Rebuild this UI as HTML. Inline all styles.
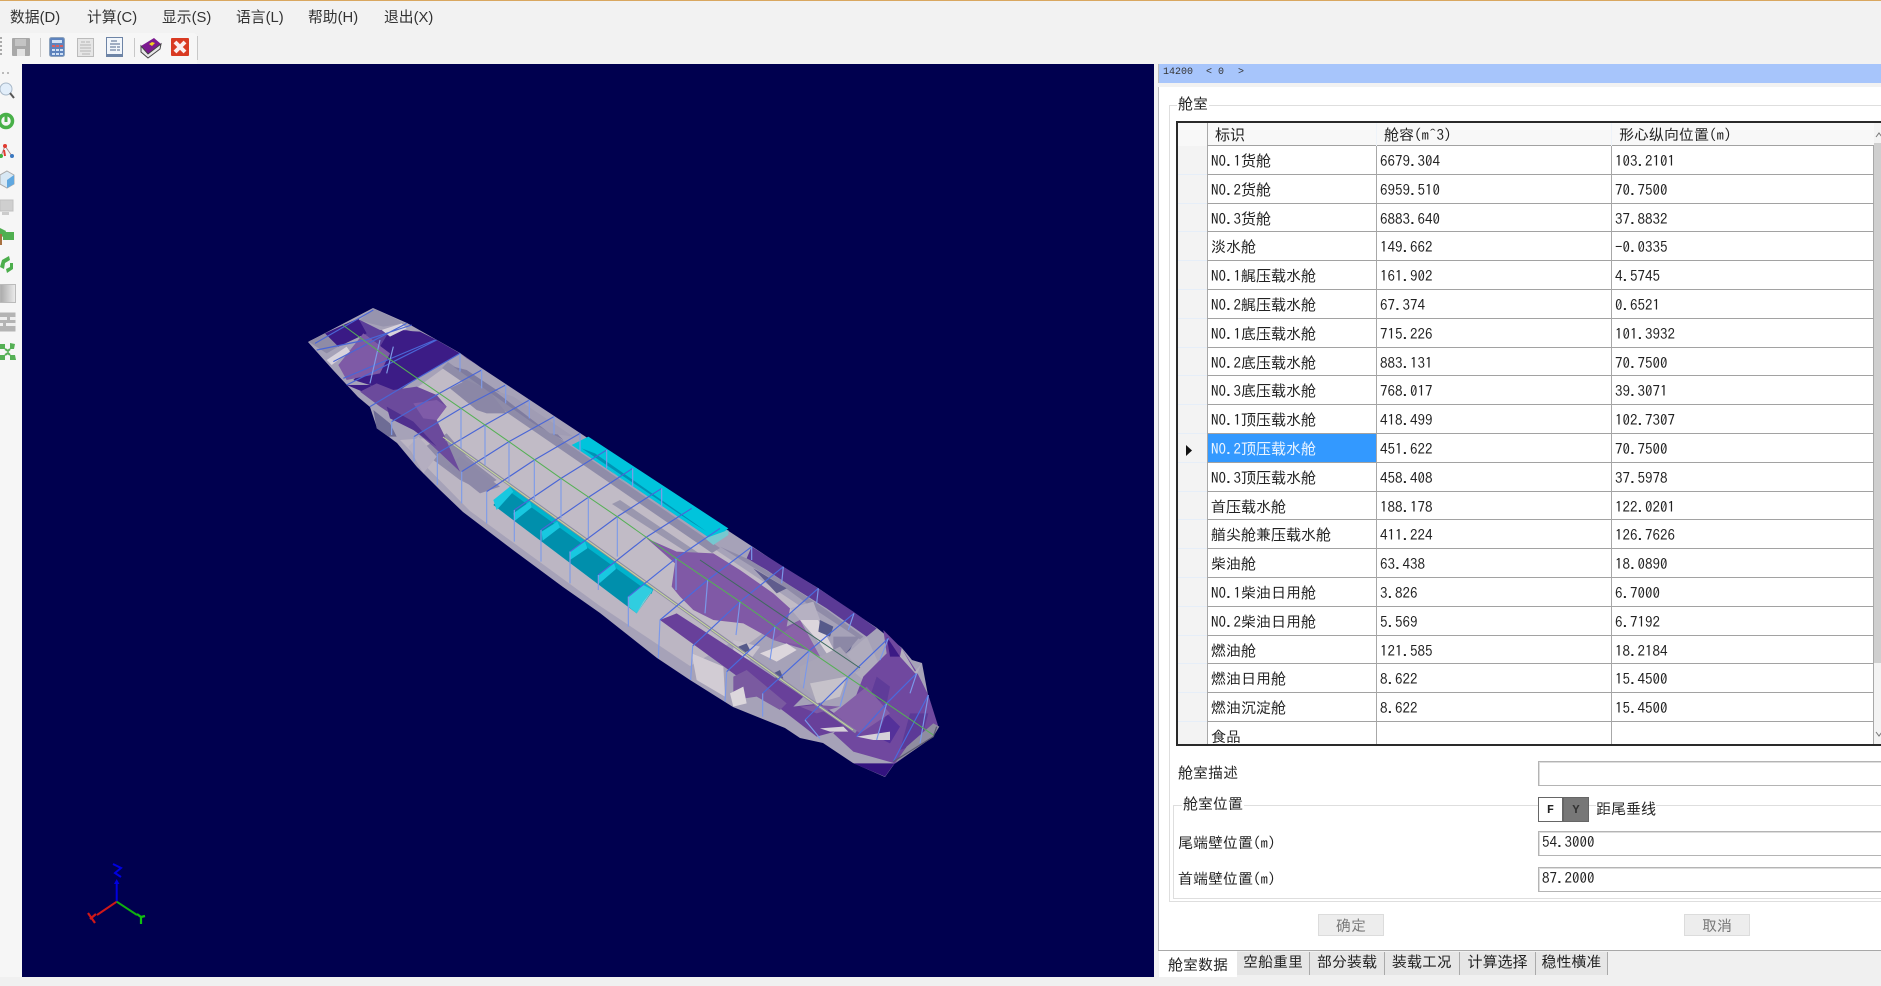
<!DOCTYPE html>
<html lang="zh"><head><meta charset="utf-8"><title>舱室数据</title>
<style>
html,body{margin:0;padding:0;background:#f0f0f0}
#w{position:relative;width:1881px;height:986px;overflow:hidden;background:#f2f2f2;filter:blur(.35px);font-family:IPAGothic,"Noto Sans CJK SC",sans-serif;font-size:15px;color:#222}
#w div,#w span{position:absolute;white-space:nowrap}
.m{top:7px;font:14.8px/22px "Liberation Sans","Noto Sans CJK SC",sans-serif;color:#333}
.r{position:relative!important;height:28.8px;width:705px;box-sizing:border-box}
.r b{position:absolute;top:0;font-weight:400;line-height:30px;height:28.8px;box-sizing:border-box;border-bottom:1px solid #a2a2a2;background:#fff;border-left:1px solid #a8a8a8;padding-left:3px;overflow:hidden}
.r i{position:absolute;left:0;top:0;width:29px;height:28.8px;box-sizing:border-box;border-bottom:1px solid #e6eef8;background:#f3f3f3}
.a{left:29px;width:169px}.b{left:198px;width:235px}.c{left:433px;width:263px;border-right:1px solid #a8a8a8}
.in{left:1538px;width:360px;height:25px;box-sizing:border-box;border:1px solid #b4b4b4;box-shadow:inset 1px 1px 0 #ddd;background:#fff;line-height:20px;padding-left:3px}
.t{top:952px;height:23px;box-sizing:border-box;background:#e6e6e6;border-right:1px solid #aaa;text-align:center;line-height:20px}
.btn{top:914px;width:66px;height:22px;box-sizing:border-box;background:#ededed;border:1px solid #dcdcdc;text-align:center;line-height:21px;color:#777}
</style></head><body><div id="w">
<div style="left:0;top:0;width:1881px;height:1px;background:#d9a760"></div>
<div class="m" style="left:10px">数据(D)</div><div class="m" style="left:87px">计算(C)</div><div class="m" style="left:162px">显示(S)</div><div class="m" style="left:236px">语言(L)</div><div class="m" style="left:308px">帮助(H)</div><div class="m" style="left:384px">退出(X)</div>

<div style="left:0;top:33px;width:197px;height:31px;background:#f6f6f6;border-radius:0 4px 0 0"></div>
<div style="left:0;top:64px;width:22px;height:913px;background:#f6f6f6"></div>
<div style="left:22px;top:64px;width:1132px;height:913px;background:#00004f"></div>

<svg width="1881" height="986" viewBox="0 0 1881 986" style="position:absolute;left:0;top:0">
<!-- top toolbar -->
<path d="M0 37h2v2H0zM0 41h2v2H0zM0 45h2v2H0zM0 49h2v2H0zM0 53h2v2H0z" fill="#aaa"/>
<path d="M197.5 36V60M40.5 38V57M134.5 38V57" stroke="#c8c8c8" fill="none"/>
<rect x="12" y="38" width="18" height="18" rx="1" fill="#a8a8a8"/><rect x="15" y="39" width="11" height="7" fill="#c4c4c4"/><rect x="17" y="49" width="8" height="7" fill="#e2e2e2"/>
<rect x="49.500" y="37.500" width="15" height="19" rx="2" fill="#5d83bd" stroke="#8ea3bd"/><rect x="52" y="40" width="10" height="3" fill="#cfe0f5"/><path d="M52 45h3v2h-3zM56 45h3v2h-3zM60 45h3v2h-3z" fill="#d86060"/><path d="M52 49h3v2h-3zM56 49h3v2h-3zM60 49h3v2h-3zM52 53h3v2h-3zM56 53h3v2h-3zM60 53h3v2h-3z" fill="#cfe0f5"/>
<rect x="77.500" y="38.500" width="16" height="18" fill="#e6e6e6" stroke="#bbb"/><path d="M81 42h4M86 42h4M80 45h11M80 48h11M80 51h11M82 54h8" stroke="#b4b4b4"/>
<rect x="106.500" y="37.500" width="16" height="19" fill="#f2f6fb" stroke="#6d84a6"/><path d="M111 41h6M110 44h10M110 47h6M117 47h3M110 50h6M117 50h3" stroke="#4d6488"/><path d="M107 55h15" stroke="#6d84a6" stroke-width="2"/>
<path d="M141 46L154 38L161 44L148 54Z" fill="#7c1a90"/><path d="M141 46L141 52L148 58L160 49L161 44L148 54Z" fill="#e8e8e8" stroke="#444" stroke-width="1"/><path d="M149 44l3-2 3 1-3 3z" fill="#f0d020"/>
<rect x="171" y="38" width="18" height="18" rx="1" fill="#d93a22"/><path d="M175 42l10 10M185 42l-10 10" stroke="#fbeeee" stroke-width="4"/>
<!-- left toolbar -->
<path d="M2 72h2v2H2zM7 72h2v2H7z" fill="#bbb"/>
<circle cx="6" cy="89" r="6" fill="#e2eefa" stroke="#a8b8c8"/><path d="M10 93l4 5" stroke="#555" stroke-width="2"/>
<circle cx="6" cy="121" r="6.500" fill="none" stroke="#48b048" stroke-width="3.500"/><path d="M6 116v6" stroke="#48b048" stroke-width="3"/>
<path d="M5 146L1 156M5 146L12 156" stroke="#a88" stroke-width="1"/><circle cx="5" cy="146" r="2" fill="#e03a30"/><circle cx="1" cy="156" r="2" fill="#40b040"/><circle cx="12" cy="156" r="2" fill="#3a78c0"/><path d="M4 150l1 6" stroke="#e03a30" stroke-width="2"/>
<path d="M7 171l7 4v9l-7 4-7-4v-9z" fill="#d8e8f4" stroke="#aaa"/><path d="M7 180l7-5v9l-7 4z" fill="#60a8e0"/>
<rect x="0" y="200" width="13" height="11" fill="#cfcfcf" stroke="#c0c0c0"/><rect x="2" y="212" width="7" height="3" fill="#ccc"/>
<path d="M3 232h11v8h-11z" fill="#50b050"/><path d="M0 228l6 3-2 6-4-1z" fill="#50b050"/><path d="M1 234v11" stroke="#a87040" stroke-width="2"/>
<path d="M2 260l7-4 1 4-5 3-1 6-4-2zM13 263v6l-6 4-1-4 4-2v-4z" fill="#4cae4c"/>
<rect x="0" y="284.500" width="15.500" height="18" fill="url(#gg)" stroke="#bbb"/>
<rect x="0" y="312.500" width="15.500" height="19" fill="#b4b4b4"/><path d="M0 317h7v3h-7zM10 317h6v3h-6zM0 323h3v3h-3zM6 323h10v3h-10z" fill="#efefef"/>
<path d="M0 344l5 0 0 5-5 0zM10 343l5 1-1 5-4 0zM0 355h5v5h-5zM10 355h5l1 5h-6z" fill="#55b055"/><path d="M5 349l3 2 2-2M5 355l3-2 2 2" stroke="#55b055" stroke-width="2" fill="none"/>
<defs><linearGradient id="gg"><stop offset="0" stop-color="#a8a8a8"/><stop offset="1" stop-color="#ececec"/></linearGradient></defs>

<!-- hull base -->
<path d="M308 342L373 308L407 323L437 340L460 353L480 367L530 400L580 433L727 530L753 547L783 567L818 588L853 612L877 628L902 648L912 660L922 663L928 695L938 727L933 737L895 763L885 777L853 763L823 743L800 738L785 728L733 707L690 680L657 658L600 613L563 587L513 550L463 512L440 490L417 467L397 443L377 428L370 407L358 397L333 370Z" fill="#a6a2b8"/>
<!-- deck -->
<path d="M448 365L713 548L800 606L740 650L443 437L400 400Z" fill="#c1bbc6"/>
<path d="M400 440L443 437L730 643L690 666L600 606L470 511Z" fill="#bcb6c3"/>
<path d="M448 362L720 548L712 553L442 368Z" fill="#8f8ca8"/>
<path d="M620 500L712 562L708 566L612 504Z" fill="#9a97ae"/>
<g transform="translate(280 290) scale(.33333)">
<path d="M510 295L560 270L625 300L680 370L620 370L590 360Z" fill="#8b87a6"/>
<path d="M420 480L500 430L560 500L650 570L600 600L540 570Z" fill="#8f8ba8"/>
<path d="M520 230L560 240L800 400L850 450L760 400Z" fill="#7f7c9f"/>
<path d="M640 300L700 320L880 440L810 430Z" fill="#a09cb4"/>
<path d="M500 530L540 500L660 590L600 610Z" fill="#8d89a8"/>
<path d="M280 360L330 400L350 440L325 440L290 415Z" fill="#6e6c95"/>
<path d="M385 470L415 440L470 500L430 550Z" fill="#b4aec0"/>
<!-- tail -->
<path d="M240 90L280 55L375 100L310 110L270 100Z" fill="#9794ae"/>
<path d="M85 155L135 130L175 170L140 190Z" fill="#8f8ba6"/>
<path d="M190 105L240 90L300 120L380 120L420 130L330 190L250 130Z" fill="#5c3f9a"/>
<path d="M135 130L235 85L260 130L175 170Z" fill="#3a1a85"/>
<path d="M330 120L420 125L470 150L540 190L420 260L330 320L270 285L220 270L270 220Z" fill="#3c1c86"/>
<path d="M175 225L250 130L330 190L300 250L200 270Z" fill="#7e5aa6"/>
<path d="M200 285L270 285L320 320L260 310Z" fill="#3c1c86"/>
<path d="M240 305L290 280L340 300L410 290L470 315L500 350L470 390L490 430L540 545L460 470L390 410L300 350Z" fill="#6b4a9c"/>
<path d="M400 340L470 330L500 350L470 390L430 385Z" fill="#7f5ba8"/>
<path d="M320 350L400 395L470 470L400 420L330 385Z" fill="#4f2f8e"/>
<path d="M140 210L200 170L210 185L155 225ZM305 120L365 100L380 115L330 140Z" fill="#d8d3dc"/>
<path d="M540 190L600 230L560 205Z" fill="#6b4a9c"/>
</g>
<!-- bow -->
<g transform="translate(600 480) scale(.33333)">
<path d="M455 200L550 260L655 325L760 395L830 445L800 470L680 385L560 310L500 270L440 235Z" fill="#5b3a96"/>
<path d="M360 200L450 240L560 310L680 390L790 470L780 478L650 392L540 312L440 250Z" fill="#8f8ba8"/>
<path d="M460 265L560 325L530 340Z" fill="#5f5c8d"/>
<path d="M140 175L230 215L340 220L420 270L520 340L570 385L560 440L600 420L660 530L620 510L520 480L430 430L340 420L280 390L240 350L215 320L225 250Z" fill="#8059a6"/>
<path d="M600 420L640 390L670 450L740 580L700 550L660 490Z" fill="#dcd6dc"/>
<path d="M570 385L640 365L660 420L600 420Z" fill="#b6b1c2"/>
<path d="M660 420L700 440L690 470L655 455ZM710 515L770 470L750 510L720 535Z" fill="#565a8a"/>
<path d="M520 480L600 420L660 530L600 495Z" fill="#8a62a8"/>
<path d="M720 540L800 470L840 560L790 600Z" fill="#b0acbd"/>
<path d="M700 470L780 470L720 540L700 510Z" fill="#8c88a6"/>
<path d="M480 520L560 490L590 510L530 545Z" fill="#dcd6dc"/>
<path d="M400 480L480 500L450 540L400 520Z" fill="#c8c2cc"/>
<path d="M415 500L440 490L450 510L430 520Z" fill="#565a8a"/>
<path d="M520 580L540 570L550 595L530 600Z" fill="#565a8a"/>
<path d="M600 560L720 500L780 570L640 650L600 610Z" fill="#a9a5b7"/>
<path d="M630 610L740 590L720 650L650 670Z" fill="#c6c2ca"/>
<path d="M180 420L230 400L400 510L610 650L580 680L660 670L760 740L650 770L560 700L400 580Z" fill="#68409a"/>
<path d="M400 590L440 570L560 670L540 690L470 650L400 660Z" fill="#7a5aa0"/>
<path d="M275 520L370 560L375 650L290 600Z" fill="#d2ccd4"/>
<path d="M390 640L430 620L440 670L400 680Z" fill="#dcd7dc"/>
<path d="M850 450L905 505L950 575L985 645L1015 740L1000 770L885 850L760 815L700 760L740 720L790 590L820 560L860 520Z" fill="#70489f"/>
<path d="M905 505L945 575L965 550L950 585L900 530Z" fill="#b3aebe"/>
<path d="M860 470L900 530L870 530Z" fill="#3c1a85"/>
<path d="M760 850L885 850L930 820L880 855L855 890Z" fill="#33137f"/>
<path d="M860 700L900 740L870 790L830 770Z" fill="#54319a"/>
<path d="M830 590L870 620L860 670L810 650Z" fill="#5f3c99"/>
<path d="M930 700L985 700L960 790L900 810Z" fill="#5c3a97"/>
<path d="M1000 730L1018 740L1000 770L950 805L885 850L920 800Z" fill="#8f8ca0"/>
<path d="M770 770L870 755L870 780L820 780ZM660 745L730 740L745 755L690 755Z" fill="#d5d0d8"/>
<path d="M600 680L650 675L720 680L650 700Z" fill="#7e5ba4"/>
<path d="M700 700L800 620L870 700L780 760Z" fill="#845fa8"/>
</g>
<!-- cyan tanks -->
<g transform="translate(480 420) scale(.33333)">
<path d="M40 255L90 200L520 510L470 580Z" fill="#008fac"/>
<path d="M90 197L520 505L515 522L85 212Z" fill="#00b4cc"/>
<path d="M40 240L90 200L100 215L50 270ZM100 280L150 245L155 262L105 302ZM185 335L232 305L240 322L188 362ZM268 395L315 365L322 385L270 420ZM355 465L402 430L408 447L358 490Z" fill="#18c8e0"/>
<path d="M445 530L490 495L518 510L470 580L445 560Z" fill="#30cde0"/><path d="M470 580L518 510L490 545Z" fill="#80d0d8"/>
<path d="M275 75L325 50L745 325L700 362Z" fill="#00c4dc"/>
<path d="M305 85L345 100L680 335L640 310Z" fill="#0092b4"/>
<path d="M380 140L425 180L500 230L440 190Z" fill="#5ab8cc"/>
<path d="M675 355L745 330L745 345L700 375Z" fill="#76c8d0"/>
</g>
<!-- long lines -->
<path d="M443 437L730 643L800 693L853 730" stroke="#8e8aa4" stroke-width="3" transform="translate(3 2)" fill="none"/>
<path d="M443 437L730 643L800 693L853 730" stroke="#c8dc98" stroke-width="1" fill="none"/>
<!-- frames -->
<g transform="translate(280 290) scale(.33333)" fill="none" stroke-width="3.500">
<path d="M540 190L412 265L270 350M605 240L478 310L335 395M677 285L543 355L402 440M748 330L615 405L472 490M822 380L687 455L545 545M900 430L763 510L620 605M980 480L843 565L703 660M1058 535L925 622L783 720M1145 595L1012 680L870 785M1235 655L1098 742L955 855M470 150L340 215L200 285M395 105L258 150L110 180M280 60L105 160M380 100L160 215M465 150L190 265" stroke="#4a66d6"/>
<path d="M540 190V245M605 240V295M677 285V340M748 330V385M822 380V435M900 430V485M980 480V535M1058 535V590M1145 595V650M543 355V475M615 405V525M687 455V575M763 510V630M843 565V685M925 622V742M1012 680V800M335 395V435M402 440V515M472 490V585M545 545V640M620 605V700M703 660V755M783 720V815M870 785V880M955 855V900M320 250L340 170M270 280L300 150" stroke="#7f9ce8"/>
</g>
<g transform="translate(600 480) scale(.33333)" fill="none" stroke-width="3.500">
<path d="M360 145L228 235L85 350M455 200L323 300L180 420M550 260L420 365L278 498M655 325L525 440L380 575M762 400L628 512L488 640M865 475L745 590L615 720M950 580L860 670L770 770M985 645L880 845" stroke="#4a6ade"/>
<path d="M455 200V240M550 260L545 310M655 325L650 370M762 400L745 450M865 475L840 540M950 580L930 640M228 235V330M323 300L315 400M420 365L408 465M525 440L510 540M628 512L610 625M745 590L720 680M860 670L830 780M985 645L960 790M85 350V440M180 420L175 535M278 498L272 600M380 575L375 665M488 640V710M615 720L660 775" stroke="#7a98ea"/>
<path d="M880 845L1000 770L1010 740" stroke="#5a5a70"/>
</g>
<path d="M342.700 325L393.300 361.700L417.300 378.300L461 408.300L509 441.700L561 478.300L617.300 516.700L676 558.300L740 601.700L809.300 650.700L886.700 703.300L933.300 735" stroke="#55b055" stroke-width="1" fill="none"/>
<path d="M700 560L860 668" stroke="#3e6a5e" stroke-width="1" fill="none"/>
<!-- axis -->
<path d="M116.700 901.700V884" stroke="#0000e0" stroke-width="2"/><path d="M114 884l2.700-5 2.700 5z" fill="#0000e0"/>
<path d="M113 864l8 4-6 5 6 4" stroke="#0000e0" stroke-width="2" fill="none"/>
<path d="M116.700 901.700L97 915" stroke="#d01818" stroke-width="2"/><path d="M88 913l7 10M96 914l-6 5" stroke="#d01818" stroke-width="2.200"/>
<path d="M116.700 901.700L137 915" stroke="#10b010" stroke-width="2"/><path d="M137 914l4 3 4-1M141 917v7" stroke="#10c010" stroke-width="2.200" fill="none"/>
</svg>

<!-- right panel -->
<div style="left:1158px;top:64px;width:723px;height:19px;background:#a7c5fb;border-left:1px solid #bbb"></div>
<div style="left:1163px;top:66px;font:10px/13px 'Liberation Mono',monospace;color:#333">14200</div><div style="left:1206px;top:66px;font:10px/13px 'Liberation Mono',monospace;color:#333">&lt; 0</div><div style="left:1238px;top:66px;font:10px/13px 'Liberation Mono',monospace;color:#333">&gt;</div>
<div style="left:1158px;top:87px;width:723px;height:863px;background:#fff;border-left:1px solid #bbb;box-sizing:border-box"></div>
<div style="left:1169px;top:105px;width:720px;height:797px;box-sizing:border-box;border:1px solid #dedede"></div>
<div style="left:1177px;top:95px;background:#fff;padding:0 1px;line-height:18px">舱室</div>

<div style="left:1176px;top:121px;width:705px;height:625px;overflow:hidden;background:#f3f3f3;border-top:2px solid #2a2a2a;border-bottom:2px solid #2a2a2a;border-left:2px solid #2a2a2a;box-sizing:border-box">
<div style="left:0;top:0;width:696px;height:23px;background:#f8f8f8"></div>
<div style="left:29px;top:0;height:23px;width:1px;background:#a8a8a8"></div>
<div style="left:37px;top:1px;line-height:22px">标识</div><div style="left:206px;top:1px;line-height:22px">舱容(m^3)</div><div style="left:441px;top:1px;line-height:22px">形心纵向位置(m)</div>
<div style="left:0;top:23px;width:696px">
<div class="r"><i></i><b class="a">NO.1货舱</b><b class="b">6679.304</b><b class="c">103.2101</b></div>
<div class="r"><i></i><b class="a">NO.2货舱</b><b class="b">6959.510</b><b class="c">70.7500</b></div>
<div class="r"><i></i><b class="a">NO.3货舱</b><b class="b">6883.640</b><b class="c">37.8832</b></div>
<div class="r"><i></i><b class="a">淡水舱</b><b class="b">149.662</b><b class="c">-0.0335</b></div>
<div class="r"><i></i><b class="a">NO.1艉压载水舱</b><b class="b">161.902</b><b class="c">4.5745</b></div>
<div class="r"><i></i><b class="a">NO.2艉压载水舱</b><b class="b">67.374</b><b class="c">0.6521</b></div>
<div class="r"><i></i><b class="a">NO.1底压载水舱</b><b class="b">715.226</b><b class="c">101.3932</b></div>
<div class="r"><i></i><b class="a">NO.2底压载水舱</b><b class="b">883.131</b><b class="c">70.7500</b></div>
<div class="r"><i></i><b class="a">NO.3底压载水舱</b><b class="b">768.017</b><b class="c">39.3071</b></div>
<div class="r"><i></i><b class="a">NO.1顶压载水舱</b><b class="b">418.499</b><b class="c">102.7307</b></div>
<div class="r"><i></i><b class="a" style="background:#3399ff;color:#eaf4ff">NO.2顶压载水舱</b><b class="b">451.622</b><b class="c">70.7500</b></div>
<div class="r"><i></i><b class="a">NO.3顶压载水舱</b><b class="b">458.408</b><b class="c">37.5978</b></div>
<div class="r"><i></i><b class="a">首压载水舱</b><b class="b">188.178</b><b class="c">122.0201</b></div>
<div class="r"><i></i><b class="a">艏尖舱兼压载水舱</b><b class="b">411.224</b><b class="c">126.7626</b></div>
<div class="r"><i></i><b class="a">柴油舱</b><b class="b">63.438</b><b class="c">18.0890</b></div>
<div class="r"><i></i><b class="a">NO.1柴油日用舱</b><b class="b">3.826</b><b class="c">6.7000</b></div>
<div class="r"><i></i><b class="a">NO.2柴油日用舱</b><b class="b">5.569</b><b class="c">6.7192</b></div>
<div class="r"><i></i><b class="a">燃油舱</b><b class="b">121.585</b><b class="c">18.2184</b></div>
<div class="r"><i></i><b class="a">燃油日用舱</b><b class="b">8.622</b><b class="c">15.4500</b></div>
<div class="r"><i></i><b class="a">燃油沉淀舱</b><b class="b">8.622</b><b class="c">15.4500</b></div>
<div class="r"><i></i><b class="a">食品</b><b class="b"></b><b class="c"></b></div>
</div>
<div style="left:29px;top:22px;width:667px;height:1px;background:#a2a2a2"></div>
<div style="left:198px;top:0;height:23px;width:1px;background:#eef3f9"></div>
<div style="left:433px;top:0;height:23px;width:1px;background:#eef3f9"></div>
<div style="left:696px;top:20px;width:9px;height:520px;background:#cfcfcf"></div>
<svg width="9" height="8" style="position:absolute;left:697px;top:8px"><path d="M1 6l3-4 3 4" stroke="#777" fill="none"/></svg>
<svg width="9" height="8" style="position:absolute;left:697px;top:607px"><path d="M1 2l3 4 3-4" stroke="#777" fill="none"/></svg>
<svg width="8" height="12" style="position:absolute;left:7px;top:322px"><path d="M1 0l6 5.500-6 5.500z" fill="#111"/></svg>
</div>

<div style="left:1178px;top:764px;line-height:18px">舱室描述</div>
<div class="in" style="top:761px"></div>
<div style="left:1173px;top:805px;width:720px;height:94px;box-sizing:border-box;border:1px solid #dedede"></div>
<div style="left:1182px;top:795px;background:#fff;padding:0 1px;line-height:18px">舱室位置</div>
<div style="left:1538px;top:797px;width:25px;height:25px;box-sizing:border-box;background:#fff;border:1px solid #666;text-align:center;font:700 12px/24px 'Liberation Mono',monospace">F</div>
<div style="left:1563px;top:797px;width:26px;height:25px;box-sizing:border-box;background:#777;border:1px solid #666;text-align:center;font:700 12px/24px 'Liberation Mono',monospace;color:#333">Y</div>
<div style="left:1596px;top:800px;background:#fff;line-height:18px">距尾垂线</div>
<div style="left:1178px;top:834px;line-height:18px">尾端壁位置(m)</div>
<div class="in" style="top:831px">54.3000</div>
<div style="left:1178px;top:870px;line-height:18px">首端壁位置(m)</div>
<div class="in" style="top:867px">87.2000</div>
<div class="btn" style="left:1318px">确定</div><div class="btn" style="left:1684px">取消</div>

<div style="left:1158px;top:950px;width:723px;height:27px;background:#f0f0f0;border-top:1px solid #a8a8a8;box-sizing:border-box"></div>
<div style="left:1159px;top:951px;width:78px;height:26px;background:#fff;text-align:center;line-height:28px">舱室数据</div>
<div class="t" style="left:1237px;width:73px">空船重里</div><div class="t" style="left:1310px;width:75px">部分装载</div><div class="t" style="left:1385px;width:75px">装载工况</div><div class="t" style="left:1460px;width:76px">计算选择</div><div class="t" style="left:1536px;width:72px">稳性横准</div>
<div style="left:0;top:977px;width:1881px;height:9px;background:#f0f0f0"></div>
</div></body></html>
